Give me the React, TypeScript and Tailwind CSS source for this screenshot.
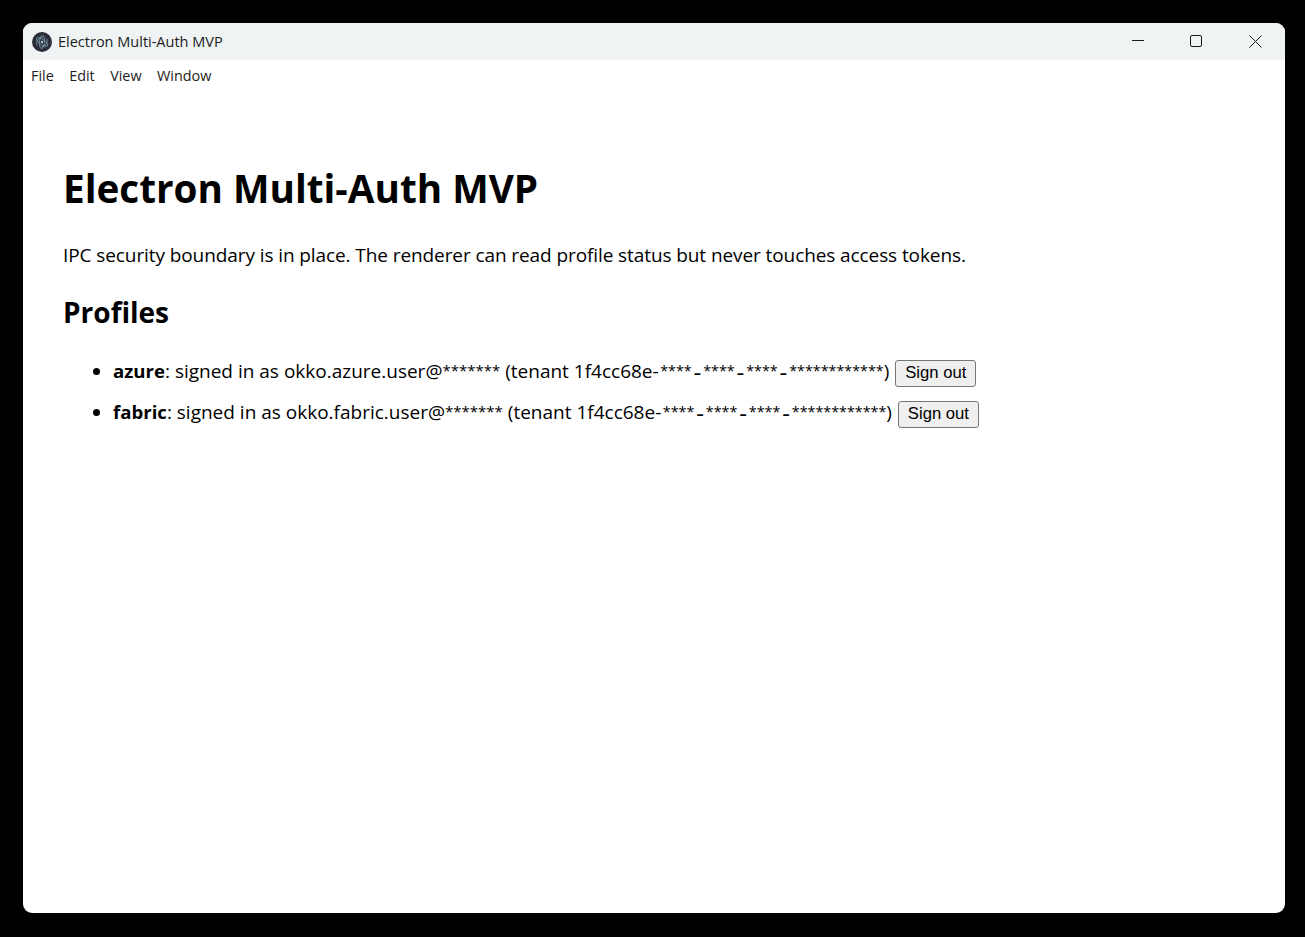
const ui = { fontFamily: '"Open Sans", "Noto Sans", sans-serif' };

function Atom() {
  return (
    <svg width="20" height="20" viewBox="0 0 20 20" className="shrink-0">
      <circle cx="10" cy="10" r="10" fill="#2b2e3a" />
      <g fill="none" stroke="#8fb4c0" strokeWidth="0.9" opacity="0.8">
        <path d="M5.2 13.2C3.6 9.6 6.6 5.4 10.6 5.2" />
        <path d="M14.8 6.8C16.4 10.4 13.4 14.6 9.4 14.8" />
        <ellipse cx="10" cy="10" rx="6.6" ry="2.6" transform="rotate(35 10 10)" />
        <ellipse cx="10" cy="10" rx="6.6" ry="2.6" transform="rotate(95 10 10)" />
      </g>
      <circle cx="10" cy="10" r="1.2" fill="#a9cdd8" />
    </svg>
  );
}

function Mask({ n }: { n: number }) {
  return <span className="align-[2px] text-[14.3px]">{"*".repeat(n)}</span>;
}

function Dash() {
  return <span className="px-[1.9px] align-[-3px] text-[24px] leading-none">-</span>;
}

function Profile({ name, user }: { name: string; user: string }) {
  return (
    <li className="mb-[11px] leading-[27px] last:mb-0">
      <b className="text-[18.6px] font-bold">{name}</b>: signed in as {user}@<span className="align-[2px] text-[15px]">*******</span> (tenant 1f4cc68e-<span className="ml-[1.5px]" /><Mask n={4} /><Dash /><Mask n={4} /><Dash /><Mask n={4} /><Dash /><Mask n={12} />){" "}
      <button
        className="ml-[1px] h-[27px] rounded-[3px] border border-[#767676] bg-[#efefef] px-[9px] pb-[2px] text-[16.67px] leading-[23px] text-black"
        style={{ fontFamily: '"Liberation Sans", Arial, sans-serif' }}
      >
        Sign out
      </button>
    </li>
  );
}

export default function App() {
  return (
    <div className="h-[937px] w-[1305px] overflow-hidden bg-black p-[23px] pr-[20px] pb-[24px]" style={ui}>
      <div className="flex h-full w-full flex-col overflow-hidden rounded-[9px] bg-white text-black">
        <div className="flex h-[37px] shrink-0 items-center bg-[#eff3f3] pl-[9px]">
          <Atom />
          <span className="ml-[6px] text-[14.5px] text-[#1c1c1c]">Electron Multi-Auth MVP</span>
          <div className="ml-auto flex h-full items-center pb-[1px]">
            <div className="flex h-full w-[58px] items-center justify-center">
              <svg width="12" height="12" viewBox="0 0 12 12"><path d="M0 5.5h12" stroke="#1a1a1a" fill="none" /></svg>
            </div>
            <div className="flex h-full w-[58px] items-center justify-center">
              <svg width="12" height="12" viewBox="0 0 12 12"><rect x="0.5" y="0.5" width="11" height="11" rx="1.5" stroke="#1a1a1a" fill="none" /></svg>
            </div>
            <div className="flex h-full w-[60px] items-center justify-center">
              <svg width="13" height="13" viewBox="0 0 13 13"><path d="M0.5 0.5l12 12M12.5 0.5l-12 12" stroke="#1a1a1a" fill="none" /></svg>
            </div>
          </div>
        </div>
        <div className="flex h-[31px] shrink-0 items-center gap-[15.4px] pl-[8px] text-[14.4px] text-[#1c1c1c]">
          <span>File</span><span>Edit</span><span>View</span><span>Window</span>
        </div>
        <div className="px-[40px] pt-[67px]">
          <h1 className="text-[38.7px] font-bold leading-[60px]">Electron Multi-Auth MVP</h1>
          <p className="mt-[24px] text-[19px] leading-[27px] tracking-[-0.09px]">IPC security boundary is in place. The renderer can read profile status but never touches access tokens.</p>
          <h2 className="mt-[24px] text-[28px] font-bold leading-[38px]">Profiles</h2>
          <ul className="mt-[26px] list-disc pl-[50px] text-[19px]">
            <Profile name="azure" user="okko.azure.user" />
            <Profile name="fabric" user="okko.fabric.user" />
          </ul>
        </div>
      </div>
    </div>
  );
}
